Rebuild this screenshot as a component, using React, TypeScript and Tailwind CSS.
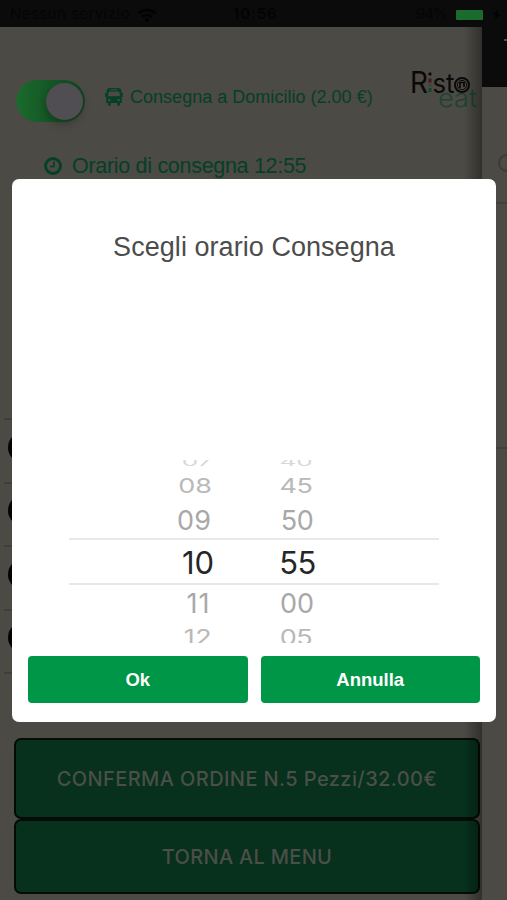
import React from 'react';

const ORDER_ROWS = [1, 2, 3, 4];

const HOURS = [
  { value: '07', row: 'h-[20px] pl-[2px]', text: 'text-[26px] scale-y-[0.45] text-[#d9d9d9]' },
  { value: '08', row: 'h-[27px] pr-[2px]', text: 'text-[27px] scale-y-[0.76] text-[#b9b9b9]' },
  { value: '09', row: 'h-[43px] pr-[4px]', text: 'text-[27px] text-[#a8a8a8]' },
  { value: '10', row: 'h-[40px] pl-[4px]', text: 'text-[31px] tracking-[-0.2px] text-[#262626]' },
  { value: '11', row: 'h-[42px] pl-[5px]', text: 'text-[27px] tracking-[1px] text-[#a8a8a8]' },
  { value: '12', row: 'h-[27px] pl-[4px]', text: 'text-[27px] tracking-[0.5px] scale-y-[0.8] text-[#b9b9b9]' },
];

const MINUTES = [
  { value: '40', row: 'h-[20px]', text: 'text-[26px] scale-y-[0.45] text-[#d9d9d9]' },
  { value: '45', row: 'h-[27px]', text: 'text-[27px] tracking-[-0.5px] scale-y-[0.76] text-[#b9b9b9]' },
  { value: '50', row: 'h-[43px] pl-[2px]', text: 'text-[27px] tracking-[-0.5px] text-[#a8a8a8]' },
  { value: '55', row: 'h-[40px] pl-[3px]', text: 'text-[31px] tracking-[-0.5px] text-[#262626]' },
  { value: '00', row: 'h-[42px] pl-[2px]', text: 'text-[27px] text-[#a8a8a8]' },
  { value: '05', row: 'h-[27px]', text: 'text-[27px] tracking-[-0.5px] scale-y-[0.8] text-[#b9b9b9]' },
];

const StatusBar: React.FC = () => (
  <div className="flex h-[27px] shrink-0 items-center bg-[#0b0b0b] pl-[10px] pt-[2px] font-['Inter',sans-serif] text-[15px] text-[#050505]">
    <span className="w-[127px] whitespace-nowrap tracking-[0.45px]">Nessun servizio</span>
    <svg width="20" height="14" viewBox="0 0 20 14" fill="none" stroke="#020202" strokeWidth="2.6">
      <path d="M1.5 5.5a12 12 0 0 1 17 0" />
      <path d="M5 9a7.2 7.2 0 0 1 10 0" />
      <path d="M8 11.5l2 2 2-2a3 3 0 0 0-4 0z" fill="#020202" strokeWidth="1" />
    </svg>
    <span className="ml-[76px] w-[50px] font-semibold tracking-[0.9px] text-[#030303]">10:56</span>
    <span className="ml-[133px] w-[40px] tracking-[-1px]">94%</span>
    <span className="h-[10px] w-[27px] rounded-[1px] bg-[#1b6b2e]" />
    <svg className="ml-[10px]" width="7" height="11" viewBox="0 0 7 11">
      <path d="M5 0L0 6h3L2 11l5-6H4z" fill="#020202" />
    </svg>
  </div>
);

const BusIcon: React.FC<{ className?: string }> = ({ className }) => (
  <svg className={className} viewBox="0 0 18 18" fill="currentColor">
    <path
      fillRule="evenodd"
      d="M5 0h8c2 0 3 .8 3.300 2.500L16.800 6v9H15v1.500a1.400 1.400 0 0 1-2.800 0V15H5.800v1.500a1.400 1.400 0 0 1-2.800 0V15H1.200V6l.5-3.500C2 .8 3 0 5 0zM5.500 1.200v1h7v-1zM3.700 3.500L3.100 8.300h11.800l-.6-4.800zM4.300 10.800a1.200 1.200 0 1 0 0 2.400 1.200 1.200 0 0 0 0-2.400zM13.700 10.800a1.200 1.200 0 1 0 0 2.400 1.200 1.200 0 0 0 0-2.400z"
    />
    <path d="M0 5h1v4H0zM17 5h1v4h-1z" />
  </svg>
);

const Logo: React.FC = () => (
  <svg width="70" height="44" viewBox="0 0 70 44" fontFamily="Inter, sans-serif">
    <text x="0" y="24.500" fontSize="29.500" textLength="18" lengthAdjust="spacingAndGlyphs" fill="#0b0807">R</text>
    <rect x="18.500" y="4.500" width="3" height="3" rx="1" fill="#0b0807" />
    <rect x="18.500" y="10.500" width="3" height="4" fill="#4a1819" />
    <rect x="18.500" y="15.500" width="3" height="3" fill="#3f403b" />
    <rect x="18.500" y="20" width="3" height="4" fill="#0d4a2a" />
    <text x="22.500" y="24.500" fontSize="27" textLength="22" lengthAdjust="spacingAndGlyphs" fill="#0b0807">st</text>
    <circle cx="52" cy="17" r="7" fill="none" stroke="#0b0807" strokeWidth="2" />
    <circle cx="52" cy="17" r="4.600" fill="none" stroke="#0b0807" strokeWidth="1" />
    <path d="M50 20v-5.500h4v4.500" fill="none" stroke="#0b0807" strokeWidth="1.700" />
    <text x="28" y="39" fontSize="25" fontWeight="300" textLength="39" lengthAdjust="spacingAndGlyphs" fill="#1e432f">eat</text>
  </svg>
);

const OrderPage: React.FC = () => (
  <main className="relative flex w-[482px] flex-col overflow-hidden bg-[#4b4a45]">
    <div className="flex h-[110px] pl-[16px]">
      <div className="mt-[53px] flex h-[42px] w-[69px] shrink-0 items-center justify-end rounded-full bg-gradient-to-r from-[#1a6a2d] to-[#11451f] pr-[2px]">
        <span className="size-[37px] rounded-full bg-[#504e52] shadow-[-1px_4px_8px_rgba(0,0,0,0.25)]" />
      </div>
      <BusIcon className="ml-[20px] mt-[61px] size-[18px] shrink-0 text-[#063f25]" />
      <span className="ml-[7px] mt-[58px] w-[280px] whitespace-nowrap text-[18px] leading-[24px] tracking-[0.02px]">
        Consegna a Domicilio (2.00 €)
      </span>
      <div className="mt-[41px] shrink-0">
        <Logo />
      </div>
    </div>
    <div className="flex h-[58px] items-center pl-[44px]">
      <svg width="18" height="18" viewBox="0 0 18 18" fill="none" stroke="#063f25">
        <circle cx="9" cy="9" r="7.500" strokeWidth="2.800" />
        <path d="M10 4.500v5H6" strokeWidth="1.700" />
      </svg>
      <span className="ml-[10px] text-[21.500px] leading-[28px] tracking-[-0.3px]">Orario di consegna 12:55</span>
    </div>
    <div className="mt-[223px] flex h-[320px] flex-col pl-[4px]">
      {ORDER_ROWS.map((row) => (
        <div key={row} className="flex h-[63.500px] items-center border-t-2 border-[#3f3e3a] pl-[4px]">
          <span className="mb-[7px] size-[31px] rounded-full bg-[#040404]" />
        </div>
      ))}
      <div className="border-t-2 border-[#3f3e3a]" />
    </div>
    <div className="flex flex-col pl-[14px] pr-[2px] font-['Inter',sans-serif] text-[20px] font-medium text-[#4a4f48]">
      <button className="h-[81px] rounded-[7px] border-2 border-[#020c06] bg-[#07301d] tracking-[0.4px]">
        CONFERMA ORDINE N.5 Pezzi/32.00€
      </button>
      <button className="h-[75px] rounded-[7px] border-2 border-[#020c06] bg-[#07301d] tracking-[0.3px]">
        TORNA AL MENU
      </button>
    </div>
    {/* shade cast by the side panel */}
    <div className="absolute inset-y-0 right-0 w-[18px] bg-gradient-to-r from-transparent to-black/35" />
  </main>
);

const SidePanel: React.FC = () => (
  <aside className="flex flex-1 flex-col overflow-hidden bg-[#4b4a45]">
    <div className="flex h-[60px] shrink-0 justify-end bg-[#0b0b0b] pt-[12px]">
      <span className="h-[2px] w-[3px] bg-[#4c4c4c]" />
    </div>
    <div className="flex h-[117px] shrink-0 items-end border-b-2 border-[#403f3b] pb-[30px] pl-[16px]">
      <span className="size-[18px] shrink-0 rounded-full border-2 border-[#3c3b37]" />
    </div>
    <div className="h-[245px] shrink-0 border-b-2 border-[#403f3b]" />
  </aside>
);

type WheelItem = { value: string; row: string; text: string };

const Wheel: React.FC<{ items: WheelItem[] }> = ({ items }) => (
  <div className="-mt-[8px] flex w-[70px] flex-col">
    {items.map((item) => (
      <div key={item.value} className={`flex shrink-0 items-center justify-center leading-none ${item.row}`}>
        <span className={item.text}>{item.value}</span>
      </div>
    ))}
  </div>
);

const TimeDialog: React.FC = () => (
  <div role="dialog" className="absolute left-[12px] top-[179px] flex h-[543px] w-[484px] flex-col rounded-[7px] bg-white px-[16px]">
    <h2 className="mt-[50px] h-[36px] whitespace-nowrap text-center text-[27px] leading-[36px] tracking-[0.05px] text-[#4c4c4c]">
      Scegli orario Consegna
    </h2>
    <div className="relative mt-[195px] flex h-[183px] gap-[30px] overflow-hidden pl-[133px] font-['Inter',sans-serif]">
      <Wheel items={HOURS} />
      <Wheel items={MINUTES} />
      <div className="absolute left-[41px] top-[78px] h-[47px] w-[370px] border-y-2 border-[#e8e8e8]" />
    </div>
    <div className="mt-[13px] flex gap-[13px] text-[18.500px] font-bold text-white">
      <button className="h-[47px] flex-1 rounded-[4px] bg-[#009647] pt-px">Ok</button>
      <button className="h-[47px] flex-1 rounded-[4px] bg-[#009647] pt-px">Annulla</button>
    </div>
  </div>
);

const App: React.FC = () => {
  return (
    <div className="relative flex h-[900px] w-[507px] flex-col overflow-hidden bg-[#4b4a45] font-['Liberation_Sans',sans-serif] text-[#063f25]">
      <StatusBar />
      <div className="flex flex-1">
        <OrderPage />
        <SidePanel />
      </div>
      <TimeDialog />
    </div>
  );
};

export default App;
